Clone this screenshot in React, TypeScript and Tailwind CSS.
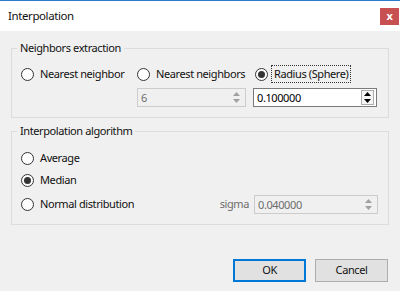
import React from 'react';

const Radio = ({ checked = false }: { checked?: boolean }) => (
  <span className="w-[13px] h-[13px] rounded-full border border-[#333333] bg-white flex items-center justify-center shrink-0">
    {checked && <span className="w-[7px] h-[7px] rounded-full bg-[#333333]" />}
  </span>
);

const SpinArrows = ({ enabled }: { enabled: boolean }) => (
  <div className={`w-[13px] h-[15px] flex flex-col items-center justify-center gap-[3px] ${enabled ? 'border border-[#adadad] bg-[#f5f5f5]' : ''}`}>
    <svg width="7" height="4" viewBox="0 0 7 4">
      <path d="M0 4 L3.5 0 L7 4 Z" fill={enabled ? '#000000' : '#a0a0a0'} />
    </svg>
    <svg width="7" height="4" viewBox="0 0 7 4">
      <path d="M0 0 L7 0 L3.5 4 Z" fill={enabled ? '#000000' : '#a0a0a0'} />
    </svg>
  </div>
);

const SpinBox = ({ value, enabled, width }: { value: string; enabled: boolean; width: string }) => (
  <div className={`${width} h-[19px] flex items-center justify-between pl-[3px] pr-[2px] border ${enabled ? 'border-[#7a7a7a] bg-white text-black' : 'border-[#cccccc] bg-[#f0f0f0] text-[#6d6d6d]'}`}>
    <span className="leading-none">{value}</span>
    <SpinArrows enabled={enabled} />
  </div>
);

const Group = ({ title, height, children }: { title: string; height: string; children: React.ReactNode }) => (
  <div className={`border border-[#dcdcdc] ${height} flex flex-col`}>
    <div className="-mt-[9px] ml-[5px] px-[3px] bg-[#f0f0f0] w-fit leading-[16px]">{title}</div>
    {children}
  </div>
);

const App = () => {
  return <div className="w-[400px] h-[291px] bg-[#f0f0f0] flex flex-col text-[11px] tracking-[-0.4px] text-[#111111] whitespace-nowrap" style={{ fontFamily: '"Noto Sans", sans-serif' }}>
      <div className="h-[31px] bg-white border-t border-[#2b7ccf] flex items-center justify-between pl-[8px] pr-[1px]">
        <span className="text-[11.5px]">Interpolation</span>
        <div className="w-[19px] h-[17px] bg-[#c75050] text-white flex items-center justify-center font-bold text-[11px] leading-none pb-[2px]">x</div>
      </div>
      <div className="flex flex-col px-[11px] pt-[17px] gap-[13px]">
        <Group title="Neighbors extraction" height="h-[70px]">
          <div className="flex items-center mt-[9px] pl-[9px] h-[18px]">
            <div className="flex items-center gap-[6px] w-[116px]">
              <Radio />
              <span>Nearest neighbor</span>
            </div>
            <div className="flex items-center gap-[6px] w-[118px]">
              <Radio />
              <span>Nearest neighbors</span>
            </div>
            <div className="flex items-center gap-[3px]">
              <Radio checked />
              <span className="border border-dotted border-[#333333] px-[2px] leading-[16px]">Radius (Sphere)</span>
            </div>
          </div>
          <div className="flex items-center mt-[5px] pl-[125px] gap-[7px]">
            <SpinBox value="6" enabled={false} width="w-[109px]" />
            <SpinBox value="0.100000" enabled width="w-[124px]" />
          </div>
        </Group>
        <Group title="Interpolation algorithm" height="h-[94px]">
          <div className="flex flex-col pl-[9px] mt-[10px]">
            <div className="flex items-center gap-[6px] h-[18px]">
              <Radio />
              <span>Average</span>
            </div>
            <div className="flex items-center gap-[6px] h-[18px] mt-[4px]">
              <Radio checked />
              <span>Median</span>
            </div>
            <div className="flex items-center h-[18px] mt-[6px]">
              <div className="flex items-center gap-[6px] flex-1">
                <Radio />
                <span>Normal distribution</span>
              </div>
              <span className="text-[#6d6d6d] mr-[5px]">sigma</span>
              <div className="mr-[10px]">
                <SpinBox value="0.040000" enabled={false} width="w-[124px]" />
              </div>
            </div>
          </div>
        </Group>
      </div>
      <div className="flex justify-end gap-[9px] pr-[12px] mt-[34px]">
        <button className="w-[73px] h-[23px] bg-[#e1e1e1] border-2 border-[#0078d7]">OK</button>
        <button className="w-[73px] h-[23px] bg-[#e1e1e1] border border-[#adadad]">Cancel</button>
      </div>
    </div>;
};
export default App;
